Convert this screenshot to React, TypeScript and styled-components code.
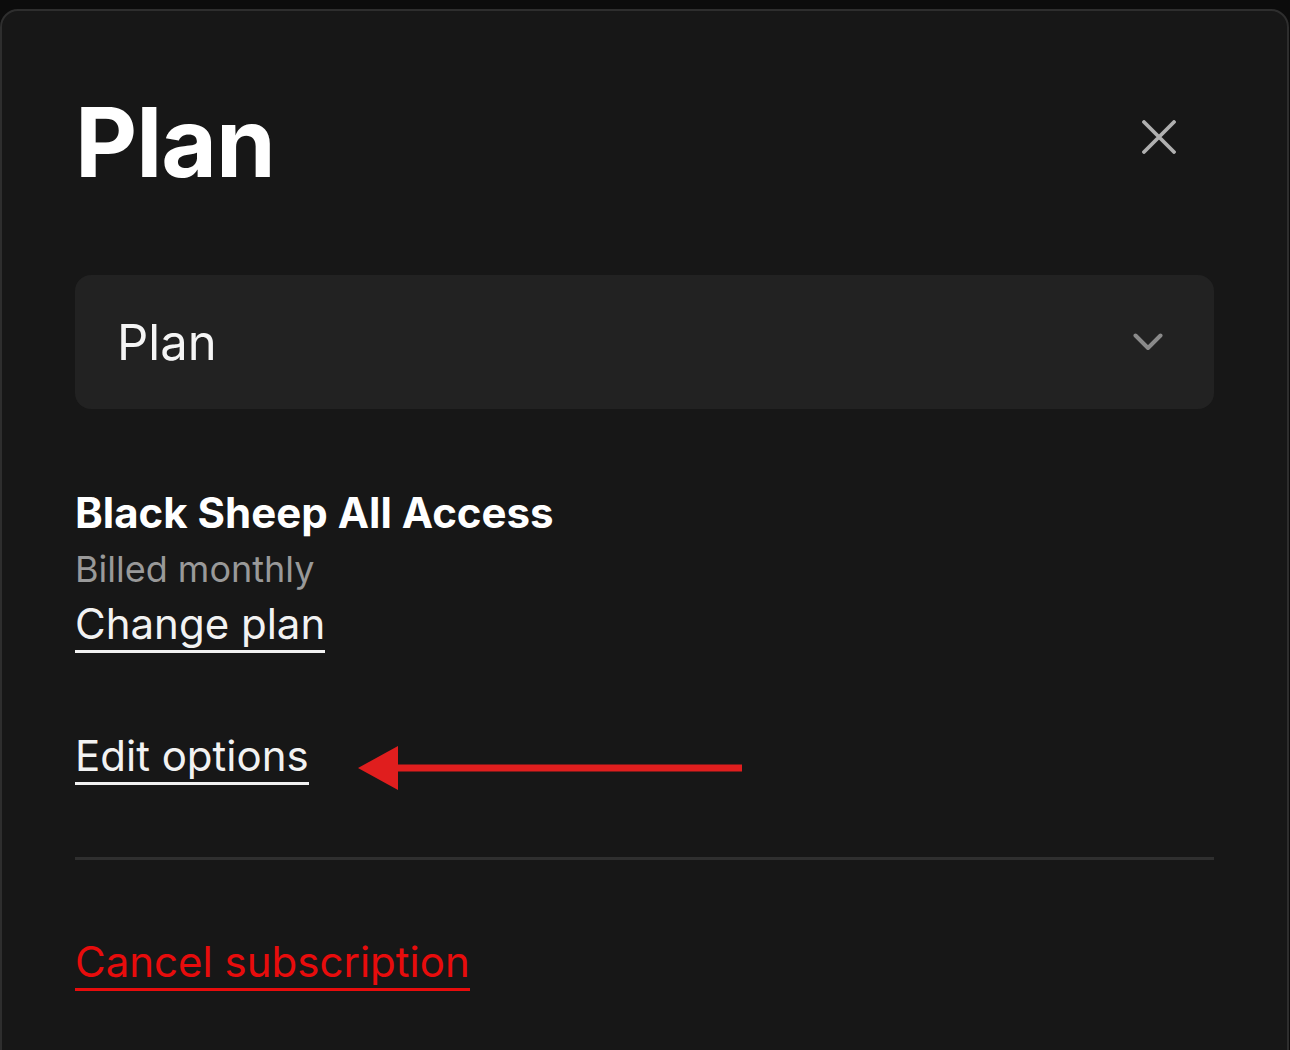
import React from 'react';
import styled, { createGlobalStyle } from 'styled-components';

const GlobalStyle = createGlobalStyle`
  html, body {
    margin: 0;
    padding: 0;
    background: #0c0c0c;
    font-family: Inter, "Noto Sans", sans-serif;
    -webkit-font-smoothing: antialiased;
  }
`;

function CloseIcon() {
  return (
    <svg width="34" height="34" viewBox="0 0 34 34" fill="none">
      <path d="M2 2 L32 32 M32 2 L2 32" stroke="#b0b0b0" strokeWidth="3.8" strokeLinecap="round" />
    </svg>
  );
}

function ChevronDown() {
  return (
    <svg width="30" height="18" viewBox="0 0 30 18" fill="none">
      <path d="M2.5 2.5 L15 15 L27.5 2.5" stroke="#8a8a8a" strokeWidth="4" strokeLinecap="round" strokeLinejoin="round" />
    </svg>
  );
}

function Arrow() {
  return (
    <svg width="386" height="46" viewBox="0 0 386 46" fill="none">
      <rect x="36" y="19.5" width="348" height="7" fill="#e01e1e" />
      <polygon points="0,23 40,1 40,45" fill="#e01e1e" />
    </svg>
  );
}

function App() {
  return (
    <Page>
      <GlobalStyle />
      <Panel>
        <Header>
          <Title>Plan</Title>
          <CloseButton aria-label="Close">
            <CloseIcon />
          </CloseButton>
        </Header>

        <Select>
          <SelectLabel>Plan</SelectLabel>
          <ChevronDown />
        </Select>

        <PlanInfo>
          <PlanName>Black Sheep All Access</PlanName>
          <Billing>Billed monthly</Billing>
          <LinkRow>
            <TextLink>Change plan</TextLink>
          </LinkRow>
        </PlanInfo>

        <EditRow>
          <TextLink>Edit options</TextLink>
          <ArrowWrap>
            <Arrow />
          </ArrowWrap>
        </EditRow>

        <Divider />

        <CancelRow>
          <TextLink danger>Cancel subscription</TextLink>
        </CancelRow>
      </Panel>
    </Page>
  );
}

const Page = styled.div`
  padding-top: 9px;
  height: 1041px;
  overflow: hidden;
`;

const Panel = styled.div`
  box-sizing: border-box;
  width: 1289px;
  min-height: 1100px;
  background: #171717;
  border: 2px solid #2e2e2e;
  border-radius: 18px;
  padding: 83px 73px 0 73px;
`;

const Header = styled.div`
  display: flex;
  align-items: center;
  justify-content: space-between;
`;

const Title = styled.h1`
  margin: 0;
  font-size: 96px;
  line-height: 96px;
  font-weight: 700;
  color: #ffffff;
  letter-spacing: -1px;
`;

const CloseButton = styled.button`
  background: none;
  border: none;
  padding: 0;
  margin-right: 38px;
  margin-top: -10px;
  display: flex;
  cursor: pointer;
`;

const Select = styled.div`
  margin-top: 85px;
  height: 134px;
  border-radius: 16px;
  background: #222222;
  display: flex;
  align-items: center;
  justify-content: space-between;
  padding: 0 51px 0 42px;
`;

const SelectLabel = styled.span`
  font-size: 49px;
  color: #f5f5f5;
`;

const PlanInfo = styled.div`
  margin-top: 76px;
  display: flex;
  flex-direction: column;
`;

const PlanName = styled.div`
  font-size: 42px;
  font-weight: 700;
  line-height: 56px;
  color: #ffffff;
`;

const Billing = styled.div`
  font-size: 36px;
  line-height: 57px;
  color: #999999;
`;

const LinkRow = styled.div`
  display: flex;
`;

const TextLink = styled.a<{ danger?: boolean }>`
  display: inline-block;
  font-size: 42px;
  line-height: 52px;
  color: ${p => (p.danger ? '#e80c0c' : '#f2f2f2')};
  border-bottom: 3px solid ${p => (p.danger ? '#e80c0c' : '#f2f2f2')};
  cursor: pointer;
`;

const EditRow = styled.div`
  margin-top: 77px;
  display: flex;
  align-items: flex-start;
`;

const ArrowWrap = styled.div`
  margin: 15px 0 0 49px;
  display: flex;
`;

const Divider = styled.hr`
  margin: 66px 0 0 0;
  border: none;
  height: 3px;
  background: #2f2f2f;
`;

const CancelRow = styled.div`
  margin-top: 76px;
  display: flex;
`;

export default App;
